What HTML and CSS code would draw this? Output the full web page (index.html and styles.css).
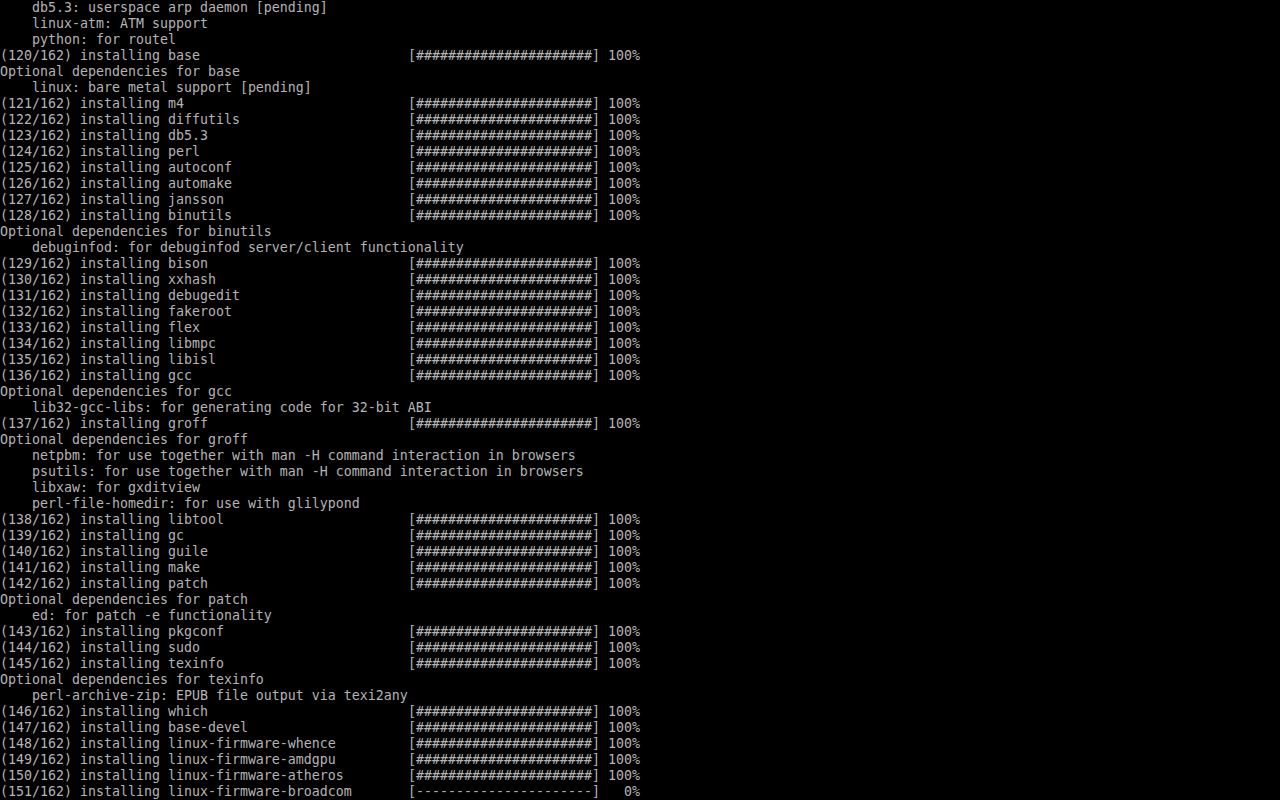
FILE: index.html
```html
<!DOCTYPE html>
<html>
<head>
    <title>tty1</title>
    <link rel="stylesheet" href="styles.css">
</head>
<body>
    <div class="console">
        <div class="line">    db5.3: userspace arp daemon [pending]</div>
        <div class="line">    linux-atm: ATM support</div>
        <div class="line">    python: for routel</div>
        <div class="line"><span class="name">(120/162) installing base</span><span class="bar">[######################] 100%</span></div>
        <div class="line">Optional dependencies for base</div>
        <div class="line">    linux: bare metal support [pending]</div>
        <div class="line"><span class="name">(121/162) installing m4</span><span class="bar">[######################] 100%</span></div>
        <div class="line"><span class="name">(122/162) installing diffutils</span><span class="bar">[######################] 100%</span></div>
        <div class="line"><span class="name">(123/162) installing db5.3</span><span class="bar">[######################] 100%</span></div>
        <div class="line"><span class="name">(124/162) installing perl</span><span class="bar">[######################] 100%</span></div>
        <div class="line"><span class="name">(125/162) installing autoconf</span><span class="bar">[######################] 100%</span></div>
        <div class="line"><span class="name">(126/162) installing automake</span><span class="bar">[######################] 100%</span></div>
        <div class="line"><span class="name">(127/162) installing jansson</span><span class="bar">[######################] 100%</span></div>
        <div class="line"><span class="name">(128/162) installing binutils</span><span class="bar">[######################] 100%</span></div>
        <div class="line">Optional dependencies for binutils</div>
        <div class="line">    debuginfod: for debuginfod server/client functionality</div>
        <div class="line"><span class="name">(129/162) installing bison</span><span class="bar">[######################] 100%</span></div>
        <div class="line"><span class="name">(130/162) installing xxhash</span><span class="bar">[######################] 100%</span></div>
        <div class="line"><span class="name">(131/162) installing debugedit</span><span class="bar">[######################] 100%</span></div>
        <div class="line"><span class="name">(132/162) installing fakeroot</span><span class="bar">[######################] 100%</span></div>
        <div class="line"><span class="name">(133/162) installing flex</span><span class="bar">[######################] 100%</span></div>
        <div class="line"><span class="name">(134/162) installing libmpc</span><span class="bar">[######################] 100%</span></div>
        <div class="line"><span class="name">(135/162) installing libisl</span><span class="bar">[######################] 100%</span></div>
        <div class="line"><span class="name">(136/162) installing gcc</span><span class="bar">[######################] 100%</span></div>
        <div class="line">Optional dependencies for gcc</div>
        <div class="line">    lib32-gcc-libs: for generating code for 32-bit ABI</div>
        <div class="line"><span class="name">(137/162) installing groff</span><span class="bar">[######################] 100%</span></div>
        <div class="line">Optional dependencies for groff</div>
        <div class="line">    netpbm: for use together with man -H command interaction in browsers</div>
        <div class="line">    psutils: for use together with man -H command interaction in browsers</div>
        <div class="line">    libxaw: for gxditview</div>
        <div class="line">    perl-file-homedir: for use with glilypond</div>
        <div class="line"><span class="name">(138/162) installing libtool</span><span class="bar">[######################] 100%</span></div>
        <div class="line"><span class="name">(139/162) installing gc</span><span class="bar">[######################] 100%</span></div>
        <div class="line"><span class="name">(140/162) installing guile</span><span class="bar">[######################] 100%</span></div>
        <div class="line"><span class="name">(141/162) installing make</span><span class="bar">[######################] 100%</span></div>
        <div class="line"><span class="name">(142/162) installing patch</span><span class="bar">[######################] 100%</span></div>
        <div class="line">Optional dependencies for patch</div>
        <div class="line">    ed: for patch -e functionality</div>
        <div class="line"><span class="name">(143/162) installing pkgconf</span><span class="bar">[######################] 100%</span></div>
        <div class="line"><span class="name">(144/162) installing sudo</span><span class="bar">[######################] 100%</span></div>
        <div class="line"><span class="name">(145/162) installing texinfo</span><span class="bar">[######################] 100%</span></div>
        <div class="line">Optional dependencies for texinfo</div>
        <div class="line">    perl-archive-zip: EPUB file output via texi2any</div>
        <div class="line"><span class="name">(146/162) installing which</span><span class="bar">[######################] 100%</span></div>
        <div class="line"><span class="name">(147/162) installing base-devel</span><span class="bar">[######################] 100%</span></div>
        <div class="line"><span class="name">(148/162) installing linux-firmware-whence</span><span class="bar">[######################] 100%</span></div>
        <div class="line"><span class="name">(149/162) installing linux-firmware-amdgpu</span><span class="bar">[######################] 100%</span></div>
        <div class="line"><span class="name">(150/162) installing linux-firmware-atheros</span><span class="bar">[######################] 100%</span></div>
        <div class="line"><span class="name">(151/162) installing linux-firmware-broadcom</span><span class="bar">[----------------------]   0%</span></div>
    </div>
</body>
</html>
```

FILE: styles.css
```css
* {
    margin: 0;
    padding: 0;
    box-sizing: border-box;
}

body {
    background: #000;
    width: 1280px;
    height: 800px;
    overflow: hidden;
}

.console {
    font-family: 'DejaVu Sans Mono', 'Liberation Mono', monospace;
    font-size: 13.29px;
    line-height: 16px;
    color: #b4b4b4;
}

.line {
    display: flex;
    height: 16px;
    white-space: pre;
}

.name {
    width: 408px;
    flex-shrink: 0;
    overflow: hidden;
}

.bar {
    white-space: pre;
}
```
